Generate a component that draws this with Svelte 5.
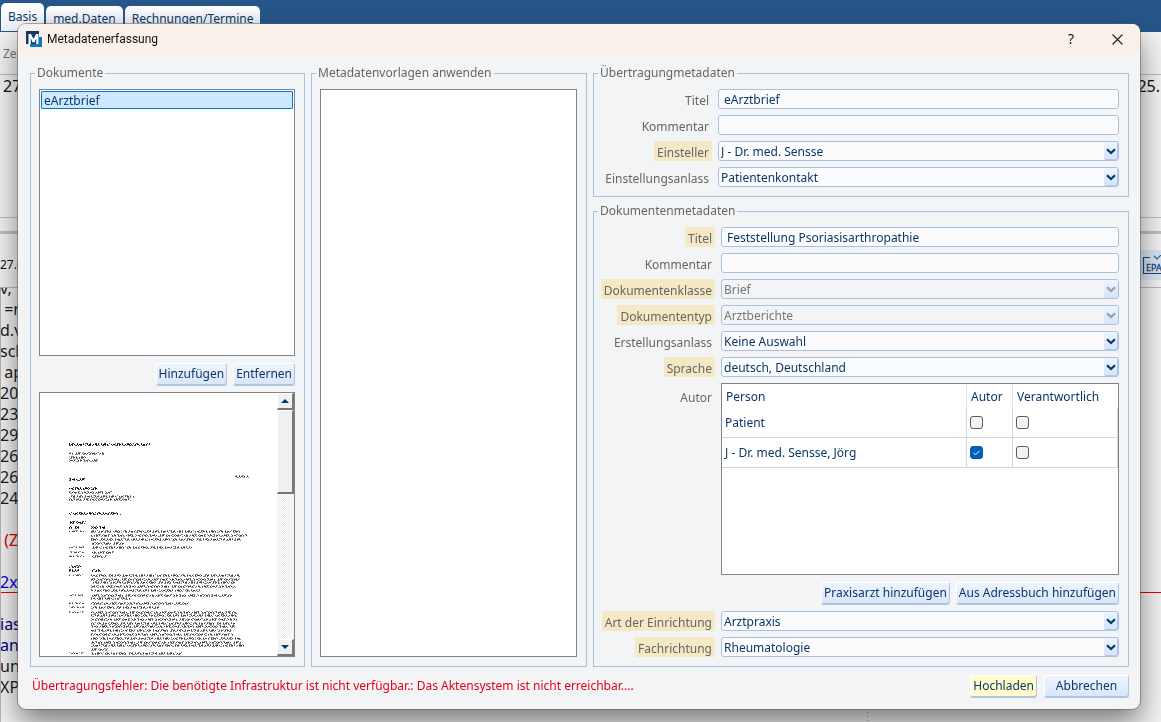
<script lang="ts">
	type Field = {
		id: string;
		label: string;
		kind: 'text' | 'select';
		value: string;
		required?: boolean;
		disabled?: boolean;
	};

	type Line = { y: number; w: number; x?: number; bold?: boolean; date?: boolean };

	const tabs = ['Basis', 'med.Daten', 'Rechnungen/Termine'];

	const transferFields: Field[] = [
		{ id: 't-titel', label: 'Titel', kind: 'text', value: 'eArztbrief' },
		{ id: 't-kommentar', label: 'Kommentar', kind: 'text', value: '' },
		{ id: 't-einsteller', label: 'Einsteller', kind: 'select', value: 'J - Dr. med. Sensse', required: true },
		{ id: 't-anlass', label: 'Einstellungsanlass', kind: 'select', value: 'Patientenkontakt' }
	];

	const documentFields: Field[] = [
		{ id: 'd-titel', label: 'Titel', kind: 'text', value: 'Feststellung Psoriasisarthropathie', required: true },
		{ id: 'd-kommentar', label: 'Kommentar', kind: 'text', value: '' },
		{ id: 'd-klasse', label: 'Dokumentenklasse', kind: 'select', value: 'Brief', required: true, disabled: true },
		{ id: 'd-typ', label: 'Dokumententyp', kind: 'select', value: 'Arztberichte', required: true, disabled: true },
		{ id: 'd-anlass', label: 'Erstellungsanlass', kind: 'select', value: 'Keine Auswahl' },
		{ id: 'd-sprache', label: 'Sprache', kind: 'select', value: 'deutsch, Deutschland', required: true }
	];

	const facilityFields: Field[] = [
		{ id: 'f-art', label: 'Art der Einrichtung', kind: 'select', value: 'Arztpraxis', required: true },
		{ id: 'f-fach', label: 'Fachrichtung', kind: 'select', value: 'Rheumatologie', required: true }
	];

	let persons = $state([
		{ name: 'Patient', author: false, responsible: false },
		{ name: 'J - Dr. med. Sensse, Jörg', author: true, responsible: false }
	]);

	let documents = $state(['eArztbrief']);
	let selected = $state(0);

	// entries of the patient file behind the dialog
	const entries = [
		{ text: 'v,' },
		{ text: ' =r' },
		{ text: 'd.v' },
		{ text: 'sch' },
		{ text: ' ap' },
		{ text: '20' },
		{ text: '23' },
		{ text: '29' },
		{ text: '26' },
		{ text: '26' },
		{ text: '24' },
		{ text: '' },
		{ text: ' (Z', tone: 'red' },
		{ text: '' },
		{ text: '2x', tone: 'blue' },
		{ text: '' },
		{ text: 'ias', tone: 'navy' },
		{ text: 'an', tone: 'navy' },
		{ text: 'und' },
		{ text: 'XP' }
	];

	// text lines on the preview page, relative to the preview area
	const lines: Line[] = [
		{ y: 51, w: 81, bold: true },
		{ y: 60, w: 35 },
		{ y: 64, w: 17 },
		{ y: 67, w: 29 },
		{ x: 195, y: 83, w: 14 },
		{ y: 86, w: 16, bold: true },
		{ y: 95, w: 28, bold: true },
		{ y: 99, w: 43 },
		{ y: 103, w: 65 },
		{ y: 106, w: 62 },
		{ y: 120, w: 52, bold: true },
		{ y: 129, w: 17, bold: true },
		{ y: 134, w: 10, bold: true },
		{ x: 51, y: 134, w: 14, bold: true },
		{ x: 51, y: 138, w: 149, date: true },
		{ x: 51, y: 142, w: 156 },
		{ x: 51, y: 146, w: 150 },
		{ x: 51, y: 150, w: 33 },
		{ x: 51, y: 154, w: 101, date: true },
		{ x: 51, y: 159, w: 23, date: true },
		{ x: 51, y: 163, w: 16, date: true },
		{ y: 173, w: 12, bold: true },
		{ y: 177, w: 10, bold: true },
		{ x: 51, y: 177, w: 10, bold: true },
		{ x: 51, y: 182, w: 149, date: true },
		{ x: 51, y: 186, w: 149 },
		{ x: 51, y: 189, w: 144 },
		{ x: 51, y: 193, w: 145 },
		{ x: 51, y: 197, w: 109 },
		{ x: 51, y: 202, w: 142, date: true },
		{ x: 51, y: 205, w: 40 },
		{ x: 51, y: 210, w: 98, date: true },
		{ x: 51, y: 214, w: 68, date: true },
		{ x: 51, y: 219, w: 146, date: true },
		{ x: 51, y: 222, w: 146 },
		{ x: 51, y: 226, w: 146 },
		{ x: 51, y: 230, w: 144 },
		{ x: 51, y: 233, w: 144 },
		{ x: 51, y: 237, w: 142 },
		{ x: 51, y: 241, w: 142 },
		{ x: 51, y: 245, w: 150 },
		{ x: 51, y: 249, w: 150 },
		{ x: 51, y: 252, w: 153 },
		{ x: 51, y: 256, w: 17 },
		{ x: 51, y: 260, w: 92, date: true }
	];

	// stroke patterns for the top, middle and bottom of the tiny letters
	const upper = '1 2 2 3 1 5 1 1 3 2 1 4 2 1 1 2';
	const middle = '1 1 2 1 1 2 1 1 3 1 1 3 1 1 2 2';
	const lower = '2 1 1 2 2 1 1 1 2 3 1 2 3 1 1 3';
</script>

{#snippet fieldRow(field: Field)}
	<label for={field.id} class:required={field.required}>{field.label}</label>
	{#if field.kind === 'text'}
		<input id={field.id} class="text" type="text" value={field.value} />
	{:else}
		<div class="combo">
			<select id={field.id} disabled={field.disabled}>
				<option>{field.value}</option>
			</select>
			<span class="arrow" class:off={field.disabled}>
				<svg width="10" height="7" viewBox="0 0 10 7">
					<path d="M1 1.2 L5 5 L9 1.2" fill="none" stroke="currentColor" stroke-width="2.2" />
				</svg>
			</span>
		</div>
	{/if}
{/snippet}

<div class="app">
	<header class="tabs">
		{#each tabs as tab, i}
			<button class="tab" class:active={i === 0}>{tab}</button>
		{/each}
	</header>
	<div class="caption">Zei</div>
	<div class="panel">
		<span>27.</span>
		<span>25.</span>
	</div>
	<div class="splitter"></div>
	<div class="entry-head">
		<span>27.0</span>
		<button class="epa" aria-label="EPA">
			<svg width="24" height="20" viewBox="0 0 24 20">
				<path d="M8 2.5 H1.5 V18.5 H24" fill="none" stroke="#1d4477" stroke-width="1.2" />
				<path d="M12 1 L15 4 L21 -2" fill="none" stroke="#2b6a9a" stroke-width="1.2" />
				<text x="4" y="16" font-size="9" fill="#1d4477" stroke="#1d4477" stroke-width="0.3">EPA</text>
			</svg>
		</button>
	</div>
	<div class="entries">
		<div class="scrolled">
			{#each entries as entry}
				<div class="entry {entry.tone ?? ''}">{entry.text}</div>
			{/each}
		</div>
	</div>
</div>

<div class="dialog" role="dialog" aria-labelledby="dialog-title">
	<div class="titlebar">
		<svg class="logo" width="16" height="16" viewBox="0 0 16 16">
			<path d="M0 0 H13 V13 H0 Z" fill="#0b3c6c" />
			<path d="M13 6 H16 V16 H4 V13 H13 Z" fill="#0a78c2" />
			<path d="M2.5 13 V3 H5 L7.5 8 L10 3 H12.5 V13 H10.2 V7.5 L8.3 11.5 H6.7 L4.8 7.5 V13 Z" fill="#fff" />
		</svg>
		<h1 id="dialog-title">Metadatenerfassung</h1>
		<button class="winbtn" aria-label="Hilfe">?</button>
		<button class="winbtn" aria-label="Schließen">
			<svg width="11" height="11" viewBox="0 0 11 11">
				<path d="M0.5 0.5 L10.5 10.5 M10.5 0.5 L0.5 10.5" stroke="#222" stroke-width="1.1" />
			</svg>
		</button>
	</div>

	<div class="columns">
		<fieldset class="stack">
			<legend>Dokumente</legend>
			<ul class="list">
				{#each documents as doc, i}
					<li>
						<button class="item" class:selected={selected === i} onclick={() => (selected = i)}>{doc}</button>
					</li>
				{/each}
			</ul>
			<div class="actions">
				<button class="btn">Hinzufügen</button>
				<button class="btn">Entfernen</button>
			</div>
			<div class="preview">
				<svg class="page" aria-hidden="true">
					{#each lines as line, i}
						{@const x = line.x ?? 29}
						{#if line.date}
							<path d="M29 {line.y - 1}.5 h15" stroke="#999" stroke-dasharray={upper} stroke-dashoffset={i * 3} />
							<path d="M29 {line.y}.5 h15" stroke="#555" stroke-dasharray={lower} stroke-dashoffset={i * 5} />
						{/if}
						<path
							d="M{x} {line.y - 1}.5 h{line.w}"
							stroke={line.bold ? '#444' : '#888'}
							stroke-dasharray={upper}
							stroke-dashoffset={i * 7}
						/>
						<path
							d="M{x} {line.y}.5 h{line.w}"
							stroke={line.bold ? '#000' : '#444'}
							stroke-dasharray={middle}
							stroke-dashoffset={i * 11}
						/>
						<path
							d="M{x} {line.y + 1}.5 h{line.w}"
							stroke={line.bold ? '#444' : '#888'}
							stroke-dasharray={lower}
							stroke-dashoffset={i * 13}
						/>
					{/each}
				</svg>
				<div class="scrollbar">
					<button class="knob" aria-label="Nach oben">
						<svg width="8" height="4" viewBox="0 0 8 4"><path d="M0 4 L4 0 L8 4 Z" fill="#003a6b" /></svg>
					</button>
					<div class="knob thumb"></div>
					<button class="knob down" aria-label="Nach unten">
						<svg width="8" height="4" viewBox="0 0 8 4"><path d="M0 0 L4 4 L8 0 Z" fill="#003a6b" /></svg>
					</button>
				</div>
			</div>
		</fieldset>

		<fieldset class="stack">
			<legend>Metadatenvorlagen anwenden</legend>
			<ul class="list"></ul>
		</fieldset>

		<div class="side">
			<fieldset>
				<legend>Übertragungmetadaten</legend>
				<div class="form">
					{#each transferFields as field}
						{@render fieldRow(field)}
					{/each}
				</div>
			</fieldset>

			<fieldset class="stack grow">
				<legend>Dokumentenmetadaten</legend>
				<div class="form wide">
					{#each documentFields as field}
						{@render fieldRow(field)}
					{/each}
					<span class="caption-author" id="autor-label">Autor</span>
					<div class="table-box">
						<table aria-labelledby="autor-label">
							<thead>
								<tr>
									<th>Person</th>
									<th class="narrow">Autor</th>
									<th class="medium">Verantwortlich</th>
								</tr>
							</thead>
							<tbody>
								{#each persons as person}
									<tr>
										<td>{person.name}</td>
										<td><input type="checkbox" aria-label="Autor" bind:checked={person.author} /></td>
										<td><input type="checkbox" aria-label="Verantwortlich" bind:checked={person.responsible} /></td>
									</tr>
								{/each}
							</tbody>
						</table>
					</div>
					<div class="actions full">
						<button class="btn">Praxisarzt hinzufügen</button>
						<button class="btn">Aus Adressbuch hinzufügen</button>
					</div>
					{#each facilityFields as field}
						{@render fieldRow(field)}
					{/each}
				</div>
			</fieldset>
		</div>
	</div>

	<footer class="footer">
		<p class="error">
			Übertragungsfehler: Die benötigte Infrastruktur ist nicht verfügbar.: Das Aktensystem ist nicht erreichbar....
		</p>
		<button class="btn primary">Hochladen</button>
		<button class="btn large">Abbrechen</button>
	</footer>
</div>

<style>
	:global(body) {
		font-family: 'Noto Sans', sans-serif;
		font-size: 12px;
		line-height: 16px;
		color: #0b3768;
	}

	button,
	input,
	select {
		font: inherit;
		color: inherit;
		box-sizing: border-box;
		margin: 0;
	}

	/* application behind the dialog */
	.app {
		display: flex;
		flex-direction: column;
		height: 100vh;
		overflow: hidden;
		background: #f4f4f5;
	}

	.tabs {
		display: flex;
		align-items: flex-end;
		gap: 2px;
		height: 32px;
		padding-left: 1px;
		background: #27568a;
		flex: none;
	}

	.tab {
		height: 26px;
		padding: 0 7px;
		border: 0;
		border-radius: 5px 5px 0 0;
		background: linear-gradient(#fff, #dde5f5);
	}

	.tab.active {
		height: 29px;
		background: linear-gradient(#fff, #f0f3fa);
		border-bottom: 1px solid #27568a;
	}

	.caption {
		height: 42px;
		padding-left: 3px;
		line-height: 44px;
		color: #777;
		flex: none;
	}

	.panel {
		display: flex;
		justify-content: space-between;
		box-sizing: border-box;
		height: 144px;
		padding: 1px 1px 0 3px;
		border: 1px solid #b4c0d4;
		border-width: 1px 0;
		font-size: 16px;
		line-height: 20px;
		color: #111;
		flex: none;
	}

	.splitter {
		height: 3px;
		margin: 13px 0 16px;
		background: #c0c0c2;
		flex: none;
	}

	.entry-head {
		display: flex;
		justify-content: space-between;
		box-sizing: border-box;
		height: 38px;
		border-bottom: 1px solid #bbb;
		line-height: 30px;
		color: #111;
		flex: none;
	}

	.epa {
		display: flex;
		align-items: center;
		width: 21px;
		height: 30px;
		padding: 0 2px;
		border: 0;
		background: #dbe6f4;
		overflow: hidden;
	}

	.epa svg {
		flex: none;
	}

	.entries {
		flex: 1;
		border-left: 1px solid #b5b5b5;
		overflow: hidden;
		background:
			linear-gradient(#e00, #e00) 0 304px / 100% 1px no-repeat,
			repeating-linear-gradient(#999 0 1px, transparent 1px 4px) right 293px top 0 / 1px 100% no-repeat;
	}

	.scrolled {
		margin: -10px 0 0 -1px;
	}

	.entry {
		height: 21px;
		font-size: 16px;
		line-height: 21px;
		white-space: pre;
		color: #1c1c1c;
	}

	.entry.red {
		color: #e00000;
	}

	.entry.blue {
		color: #0000e0;
	}

	.entry.navy {
		color: #000080;
	}

	/* dialog window */
	.dialog {
		position: fixed;
		inset: 24px 21px 13px 18px;
		display: flex;
		flex-direction: column;
		border-radius: 8px;
		overflow: hidden;
		background: #f3f4f6;
		box-shadow:
			0 0 0 1px rgba(90, 90, 90, 0.5),
			0 14px 30px rgba(0, 0, 0, 0.5);
	}

	.titlebar {
		display: flex;
		align-items: center;
		height: 30px;
		padding-left: 8px;
		background: #f9f1e9;
		color: #111;
		flex: none;
	}

	h1 {
		flex: 1;
		margin: 0 0 0 5px;
		font: 12px/16px Roboto, sans-serif;
	}

	.winbtn {
		display: flex;
		align-items: center;
		justify-content: center;
		width: 46px;
		height: 30px;
		padding: 0;
		border: 0;
		background: none;
		font-size: 14px;
	}

	.columns {
		flex: 1;
		display: grid;
		grid-template-columns: 275fr 276fr 536fr;
		gap: 6px;
		min-height: 0;
		padding: 11px 11px 0 12px;
	}

	fieldset {
		min-width: 0;
		margin: 0;
		padding: 8px 9px 9px 8px;
		border: 1px solid #a9c1e0;
	}

	legend {
		margin-left: -4px;
		padding: 0 2px;
		color: #666;
	}

	.stack {
		display: flex;
		flex-direction: column;
		gap: 7px;
	}

	.side {
		display: flex;
		flex-direction: column;
		gap: 6px;
		min-width: 0;
	}

	.grow {
		flex: 1;
	}

	.list {
		flex: 1 1 0;
		box-sizing: border-box;
		margin: 0;
		padding: 1px;
		border: 1px solid #80838c;
		background: #fff;
		list-style: none;
		overflow: auto;
	}

	.item {
		display: block;
		width: 100%;
		height: 18px;
		padding: 1px 2px 0;
		border: 1px solid transparent;
		border-radius: 1px;
		background: none;
		line-height: 16px;
		text-align: left;
	}

	.item.selected {
		border-color: #0078d7;
		background: #cce8ff;
	}

	.actions {
		display: flex;
		justify-content: flex-end;
		gap: 6px;
	}

	.btn {
		height: 22px;
		padding: 0 2px;
		border: 1px solid #fff;
		border-right-color: #adc4e4;
		border-bottom-color: #adc4e4;
		border-radius: 3px;
		background: linear-gradient(#eef5fe, #d9e5fa);
		box-shadow: 0 1px #adc4e4;
		white-space: nowrap;
	}

	.btn.primary {
		background: #fffbcb;
	}

	.btn.large {
		min-width: 85px;
	}

	.preview {
		flex: 1 1 0;
		display: flex;
		box-sizing: border-box;
		min-height: 0;
		border: 1px solid #80838c;
		background: #fff;
		overflow: hidden;
	}

	.page {
		flex: 1;
		min-width: 0;
		height: 100%;
	}

	.scrollbar {
		display: flex;
		flex-direction: column;
		width: 17px;
		background: repeating-conic-gradient(#ececec 0 25%, #fff 0 50%) 0 0 / 2px 2px;
	}

	.knob {
		display: flex;
		align-items: center;
		justify-content: center;
		box-sizing: border-box;
		width: 17px;
		height: 17px;
		padding: 0;
		border: 1px solid #fff;
		border-right: 2px solid #77777a;
		border-bottom: 2px solid #77777a;
		background: #f0f0f0;
	}

	.knob.thumb {
		height: 84px;
	}

	.knob.down {
		margin-top: auto;
	}

	.form {
		display: grid;
		grid-template-columns: 109px 1fr;
		gap: 6px;
		justify-items: end;
		padding-left: 1px;
	}

	.form.wide {
		flex: 1;
		grid-template-columns: 112px 1fr;
		grid-template-rows: repeat(6, 20px) 1fr;
	}

	label,
	.caption-author {
		height: 20px;
		padding: 0 3px;
		line-height: 23px;
		color: #666;
		white-space: nowrap;
	}

	.caption-author {
		padding-top: 3px;
	}

	label.required {
		background: #f5e8c4;
	}

	.text,
	.combo,
	.table-box {
		width: 100%;
	}

	.text,
	.combo select {
		height: 20px;
		border: 1px solid #a9c1e0;
		border-radius: 3px;
		background: #fcfcfe;
	}

	.text {
		padding: 1px 5px 0;
	}

	.combo {
		position: relative;
		height: 20px;
	}

	.combo select {
		display: block;
		width: 100%;
		padding: 1px 20px 0 2px;
		appearance: none;
	}

	.combo select:disabled {
		background: #f3f4f6;
		color: #777;
		opacity: 1;
	}

	.arrow {
		position: absolute;
		top: 1px;
		right: 1px;
		bottom: 1px;
		display: flex;
		align-items: center;
		justify-content: center;
		width: 14px;
		border-radius: 2px;
		background: linear-gradient(#eef5fe, #d5e2f8);
		box-shadow: inset -1px -1px #b4c9e8;
		color: #003a6b;
		pointer-events: none;
	}

	.arrow.off {
		box-shadow: none;
		color: #9a9da3;
	}

	.table-box {
		box-sizing: border-box;
		border: 1px solid #80838c;
		background: #fff;
		overflow: hidden;
	}

	table {
		width: 100%;
		border-collapse: separate;
		border-spacing: 0;
		table-layout: fixed;
	}

	th {
		height: 22px;
		padding: 2px 4px 0;
		border-right: 1px solid #e2e2e2;
		font-weight: normal;
		text-align: left;
	}

	th:last-child {
		border-right-color: transparent;
	}

	.narrow {
		width: 37px;
	}

	.medium {
		width: 96px;
	}

	td {
		height: 29px;
		padding: 0 3px;
		border-right: 1px solid #d6d6d6;
		border-bottom: 1px solid #d6d6d6;
	}

	input[type='checkbox'] {
		display: block;
		width: 13px;
		height: 13px;
		appearance: none;
		border: 1px solid #5c5c5c;
		border-radius: 3px;
		background: #f3f3f3;
	}

	input[type='checkbox']:checked {
		border-color: #005fb8;
		background: #005fb8
			url("data:image/svg+xml,%3Csvg xmlns='http://www.w3.org/2000/svg' viewBox='0 0 11 11'%3E%3Cpath d='M2.5 5.8 L4.5 7.8 L8.5 3.8' fill='none' stroke='white'/%3E%3C/svg%3E");
	}

	.full {
		grid-column: 1 / -1;
		padding: 1px 0;
	}

	.footer {
		display: flex;
		align-items: center;
		gap: 7px;
		padding: 8px 11px 12px 14px;
	}

	.error {
		flex: 1;
		margin: 0;
		color: #e3001b;
	}
</style>
